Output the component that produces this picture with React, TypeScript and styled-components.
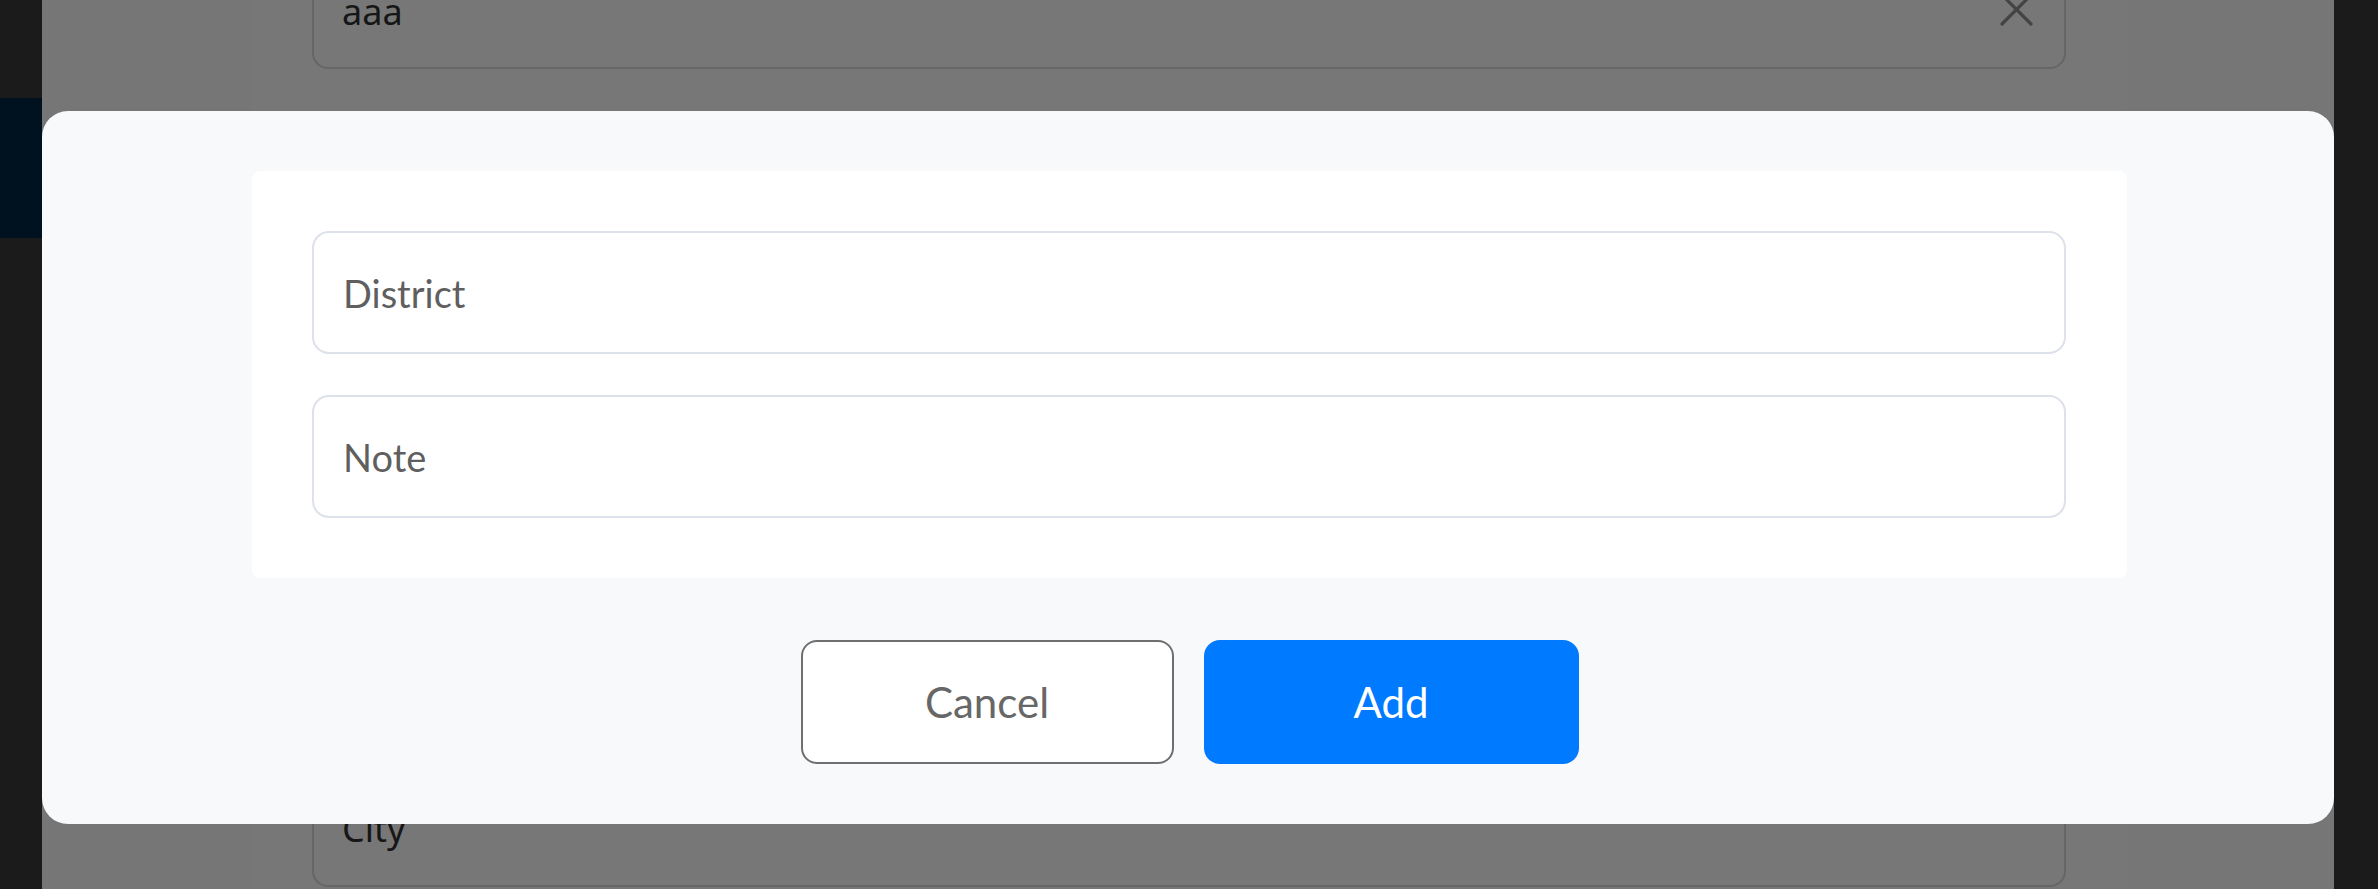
import styled, { createGlobalStyle } from 'styled-components'

const GlobalStyle = createGlobalStyle`
  html, body {
    margin: 0;
    padding: 0;
    background: #1b1b1b;
    overflow: hidden;
  }
  * {
    box-sizing: border-box;
  }
`

const FONT = `Lato, "Noto Sans", "Liberation Sans", sans-serif`

const Page = styled.div`
  width: 2378px;
  height: 889px;
  display: flex;
  overflow: hidden;
  font-family: ${FONT};
`

const Sidebar = styled.aside`
  width: 42px;
  flex-shrink: 0;
  background: #1b1b1b;
  padding-top: 98px;
`

const SideItem = styled.div`
  height: 140px;
  background: #00111f;
`

const RightEdge = styled.div`
  width: 44px;
  flex-shrink: 0;
  background: #1b1b1b;
`

const Main = styled.main`
  position: relative;
  flex: 1;
  background: #767676;
  overflow: hidden;
`

const BackPanel = styled.section`
  margin-left: 210px;
  width: 1875px;
  height: 100%;
  background: #777777;
  padding: 0 61px 0 60px;
  display: flex;
  flex-direction: column;
  gap: 41.6px;
`

const BackField = styled.div<{ $first?: boolean }>`
  flex-shrink: 0;
  height: 122px;
  margin-top: ${({ $first }) => ($first ? '-53px' : '0')};
  border: 2px solid #666666;
  border-radius: 16px;
  padding: 0 31px 0 28px;
  display: flex;
  align-items: center;
  justify-content: space-between;
  font-family: "Noto Sans", "Open Sans", sans-serif;
  font-size: 36px;
  color: #161616;
`

const BackValue = styled.span`
  padding-top: 6px;
`

const Overlay = styled.div`
  position: absolute;
  inset: 0;
  padding-top: 111px;
`

const Modal = styled.div`
  width: 100%;
  height: 713px;
  background: #f8f9fb;
  border-radius: 26px;
  padding: 60px 207px 60px 210px;
  display: flex;
  flex-direction: column;
`

const FormCard = styled.div`
  background: #ffffff;
  border-radius: 8px;
  padding: 60px 61px 60px 60px;
  display: flex;
  flex-direction: column;
  gap: 41px;
`

const Field = styled.input`
  height: 123px;
  width: 100%;
  border: 2px solid #dde1ea;
  border-radius: 17px;
  background: #ffffff;
  padding: 0 29px;
  font-family: ${FONT};
  font-size: 38px;
  color: #333;
  outline: none;

  &::placeholder {
    color: #5f5f5f;
  }
`

const Actions = styled.div`
  margin-top: 62px;
  display: flex;
  justify-content: center;
  gap: 30px;
`

const Button = styled.button<{ $primary?: boolean }>`
  width: ${({ $primary }) => ($primary ? '375px' : '373px')};
  height: 124px;
  border-radius: 16px;
  border: ${({ $primary }) => ($primary ? 'none' : '2px solid #6f6f6f')};
  background: ${({ $primary }) => ($primary ? '#007aff' : '#ffffff')};
  color: ${({ $primary }) => ($primary ? '#ffffff' : '#676767')};
  font-family: ${FONT};
  font-size: 42px;
  cursor: pointer;
`

const CloseIcon = () => (
  <svg width="33" height="33" viewBox="0 0 33 33" style={{ marginTop: 2 }}>
    <path d="M2 2 L31 31 M31 2 L2 31" stroke="#444" strokeWidth="3.2" strokeLinecap="round" />
  </svg>
)

const hidden = ['Province', 'Ward', 'Street', 'Phone']

export default function App() {
  return (
    <>
      <GlobalStyle />
      <Page>
        <Sidebar>
          <SideItem />
        </Sidebar>
        <Main>
          <BackPanel>
            <BackField $first>
              <BackValue>aaa</BackValue>
              <CloseIcon />
            </BackField>
            {hidden.map((h) => (
              <BackField key={h}>{h}</BackField>
            ))}
            <BackField>
              <BackValue>City</BackValue>
            </BackField>
          </BackPanel>
          <Overlay>
            <Modal>
              <FormCard>
                <Field placeholder="District" />
                <Field placeholder="Note" />
              </FormCard>
              <Actions>
                <Button>Cancel</Button>
                <Button $primary>Add</Button>
              </Actions>
            </Modal>
          </Overlay>
        </Main>
        <RightEdge />
      </Page>
    </>
  )
}
